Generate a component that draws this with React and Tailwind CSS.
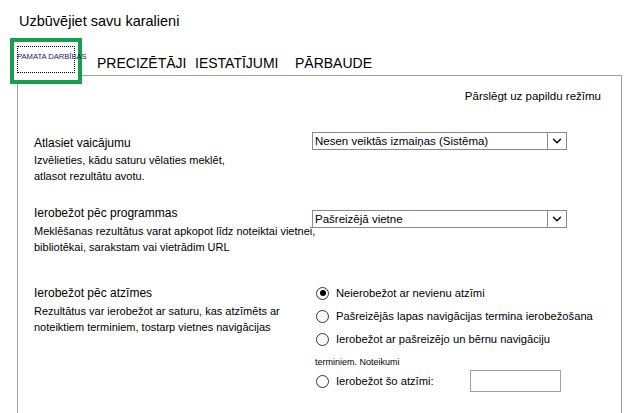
import { ChevronDown } from 'lucide-react';

const font = "font-['Liberation_Sans','Arial',sans-serif]";

function FakeSelect({ value }) {
  return (
    <div className="flex h-[18px] w-[255px] items-stretch border border-[#8a8a8a] bg-white">
      <div className="flex-1 truncate pl-[2px] text-[11.5px] leading-[16px]">{value}</div>
      <div className="flex w-[19px] items-center justify-center border-l border-[#8a8a8a]">
        <ChevronDown className="h-[14px] w-[14px]" strokeWidth={2.4} />
      </div>
    </div>
  );
}

function Radio({ checked, children }) {
  return (
    <div className="flex h-[16px] items-center gap-[7px]">
      <span className="flex h-[13px] w-[13px] items-center justify-center rounded-full border border-[#333] bg-white">
        {checked && <span className="h-[6px] w-[6px] rounded-full bg-black" />}
      </span>
      <span className="text-[11.2px] leading-[16px]">{children}</span>
    </div>
  );
}

export default function App() {
  return (
    <div className={`h-[413px] w-[627px] overflow-hidden bg-white text-black ${font}`}>
      <div className="pl-[19px] pt-[11px] text-[14.5px] leading-[20px]">Uzbūvējiet savu karalieni</div>

      {/* tabs */}
      <div className="mt-[7px] flex h-[37px] items-start pl-[10px]">
        <div className="relative z-10 h-[46px] w-[72px] shrink-0 border-[4px] border-[#14a04c] bg-white">
          <div className="ml-[3px] mt-[4px] h-[27px] w-[58px] border border-dotted border-black">
            <div className="relative z-20 -ml-[1px] whitespace-nowrap pt-[6px] text-[7.6px] leading-[8px] text-[#1a1a5a]">PAMATA DARBĪBAS</div>
          </div>
        </div>
        <div className="ml-[15px] flex pt-[17px] text-[14px] leading-[17px]">
          <span className="w-[98px]">PRECIZĒTĀJI</span>
          <span className="w-[100px]">IESTATĪJUMI</span>
          <span>PĀRBAUDE</span>
        </div>
      </div>

      {/* panel */}
      <div className="ml-[17px] h-[400px] w-[605px] border-l border-r border-t border-[#a0a0a0]">
        <div className="pr-[20px] pt-[12px] text-right text-[11.5px] leading-[16px]">Pārslēgt uz papildu režīmu</div>

        <div className="mt-[31px] flex pl-[16px]">
          <div className="w-[278px] leading-[16px]">
            <div className="mb-[1px] text-[12px]">Atlasiet vaicājumu</div>
            <div className="text-[11px]">Izvēlieties, kādu saturu vēlaties meklēt,</div>
            <div className="text-[11px]">atlasot rezultātu avotu.</div>
          </div>
          <div className="-mt-[3px]">
            <FakeSelect value="Nesen veiktās izmaiņas (Sistēma)" />
          </div>
        </div>

        <div className="mt-[21px] flex pl-[16px]">
          <div className="w-[278px] leading-[16px]">
            <div className="mb-[2px] text-[12px]">Ierobežot pēc programmas</div>
            <div className="whitespace-nowrap text-[11px]">Meklēšanas rezultātus varat apkopot līdz noteiktai vietnei,</div>
            <div className="text-[11px]">bibliotēkai, sarakstam vai vietrādim URL</div>
          </div>
          <div className="mt-[5px]">
            <FakeSelect value="Pašreizējā vietne" />
          </div>
        </div>

        <div className="mt-[30px] flex pl-[16px]">
          <div className="w-[278px] leading-[16px]">
            <div className="mb-[2px] text-[12px]">Ierobežot pēc atzīmes</div>
            <div className="text-[11px]">Rezultātus var ierobežot ar saturu, kas atzīmēts ar</div>
            <div className="text-[11px]">noteiktiem terminiem, tostarp vietnes navigācijas</div>
          </div>
          <div className="flex flex-col pl-[4px]">
            <div className="flex flex-col gap-[7px]">
              <Radio checked>Neierobežot ar nevienu atzīmi</Radio>
              <Radio>Pašreizējās lapas navigācijas termina ierobežošana</Radio>
              <Radio>Ierobežot ar pašreizējo un bērnu navigāciju</Radio>
            </div>
            <div className="-ml-[1px] mt-[9px] text-[9px] leading-[12px]">terminiem. Noteikumi</div>
            <div className="mt-[2px] flex items-center">
              <div className="w-[154px]">
                <Radio>Ierobežot šo atzīmi:</Radio>
              </div>
              <div className="h-[22px] w-[91px] border border-[#a0a0a0]" />
            </div>
          </div>
        </div>
      </div>
    </div>
  );
}
